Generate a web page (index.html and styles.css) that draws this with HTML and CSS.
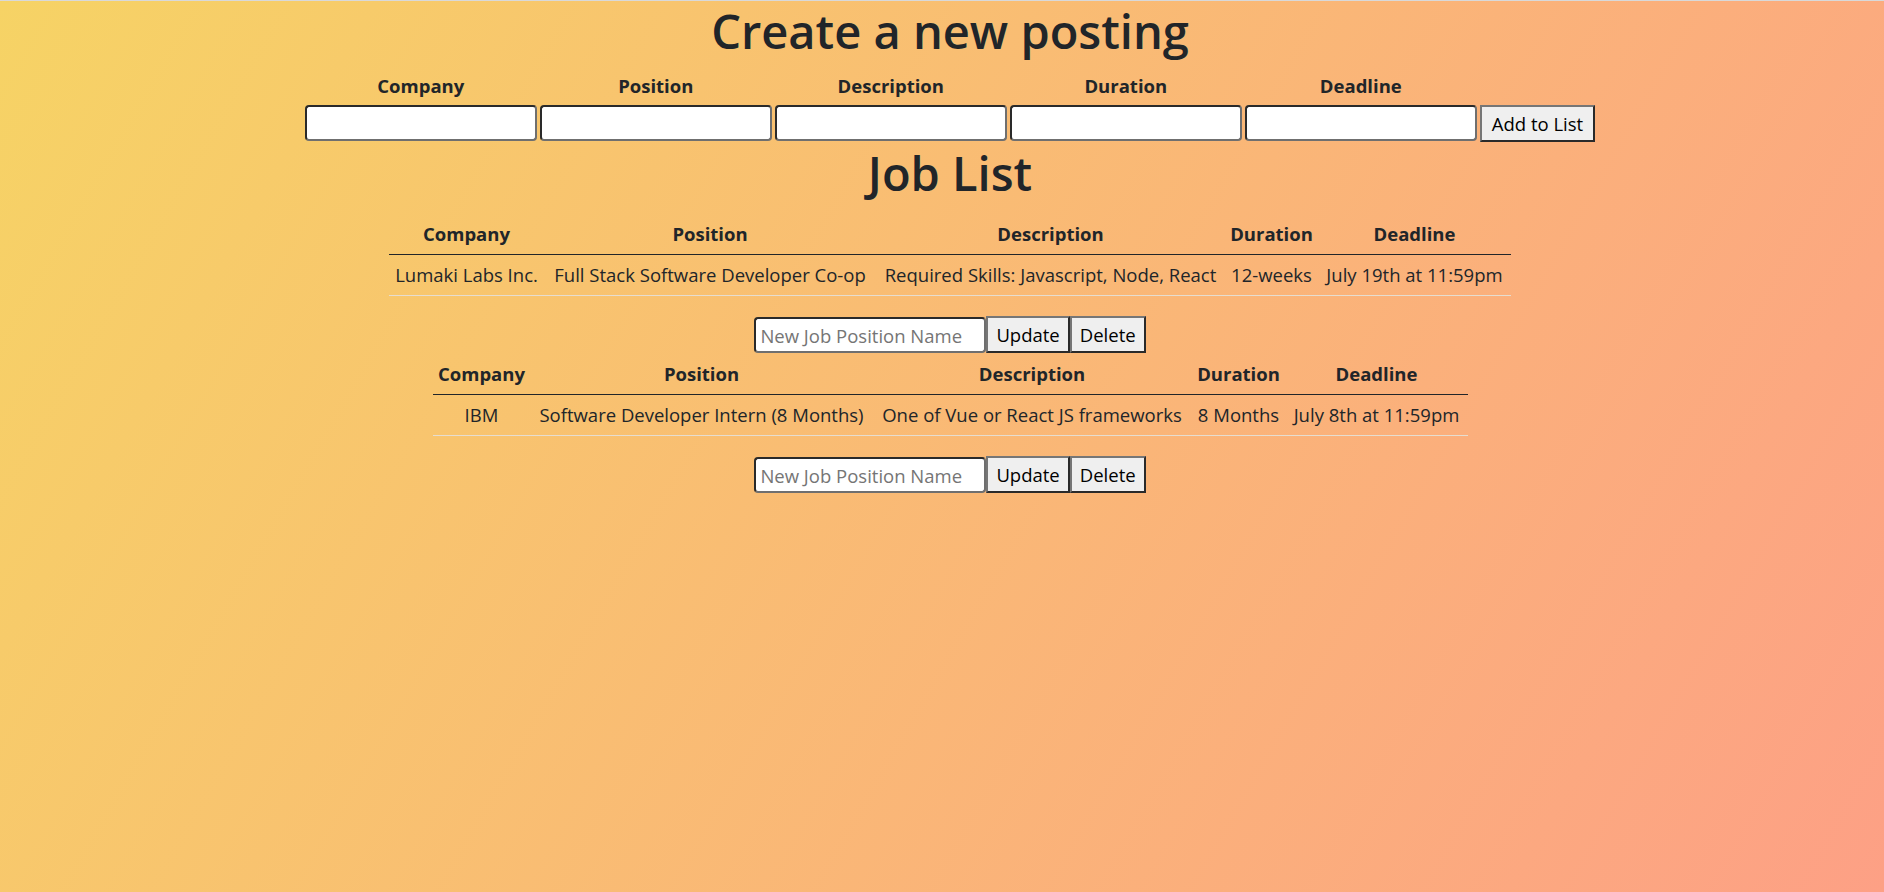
FILE: index.html
```html
<!DOCTYPE html>
<html lang="en">
<head>
<meta charset="utf-8">
<title>Job Postings</title>
<link rel="stylesheet" href="styles.css">
</head>
<body>
<div class="app">
  <h1 class="title title-create">Create a new posting</h1>
  <form class="post-form">
    <label class="field-label" for="f-company">Company</label>
    <label class="field-label" for="f-position">Position</label>
    <label class="field-label" for="f-description">Description</label>
    <label class="field-label" for="f-duration">Duration</label>
    <label class="field-label" for="f-deadline">Deadline</label>
    <span class="field-label"></span>
    <input class="text-input" id="f-company" type="text">
    <input class="text-input" id="f-position" type="text">
    <input class="text-input" id="f-description" type="text">
    <input class="text-input" id="f-duration" type="text">
    <input class="text-input" id="f-deadline" type="text">
    <button class="btn btn-add" type="button">Add to List</button>
  </form>

  <h1 class="title title-list">Job List</h1>

  <div class="job">
    <table class="job-table t1">
      <colgroup>
        <col class="t1-c1"><col class="t1-c2"><col class="t1-c3"><col class="t1-c4"><col class="t1-c5">
      </colgroup>
      <thead>
        <tr><th>Company</th><th>Position</th><th>Description</th><th>Duration</th><th>Deadline</th></tr>
      </thead>
      <tbody>
        <tr><td>Lumaki Labs Inc.</td><td>Full Stack Software Developer Co-op</td><td>Required Skills: Javascript, Node, React</td><td>12-weeks</td><td>July 19th at 11:59pm</td></tr>
      </tbody>
    </table>
    <div class="update-row">
      <input class="text-input rename-input" type="text" placeholder="New Job Position Name"><button class="btn" type="button">Update</button><button class="btn" type="button">Delete</button>
    </div>
  </div>

  <div class="job">
    <table class="job-table t2">
      <colgroup>
        <col class="t2-c1"><col class="t2-c2"><col class="t2-c3"><col class="t2-c4"><col class="t2-c5">
      </colgroup>
      <thead>
        <tr><th>Company</th><th>Position</th><th>Description</th><th>Duration</th><th>Deadline</th></tr>
      </thead>
      <tbody>
        <tr><td>IBM</td><td>Software Developer Intern (8 Months)</td><td>One of Vue or React JS frameworks</td><td>8 Months</td><td>July 8th at 11:59pm</td></tr>
      </tbody>
    </table>
    <div class="update-row">
      <input class="text-input rename-input" type="text" placeholder="New Job Position Name"><button class="btn" type="button">Update</button><button class="btn" type="button">Delete</button>
    </div>
  </div>
</div>
</body>
</html>
```

FILE: styles.css
```css
* { box-sizing: border-box; }

html {
  min-height: 100%;
  background: linear-gradient(120deg, #f6d365 0%, #fda085 100%);
}

body {
  margin: 0;
  border-top: 1px solid #d9d9d9;
  font-family: "Open Sans", "Noto Sans", "DejaVu Sans", sans-serif;
  font-size: 18.5px;
  line-height: 30px;
  color: #212529;
}

.app {
  padding-left: 16px;
  text-align: center;
}

.title {
  margin: 0 0 10px;
  font-size: 47px;
  font-weight: 600;
  line-height: 60px;
}

.title-list {
  margin-bottom: 11px;
}

.post-form {
  display: grid;
  grid-template-columns: repeat(5, 232px) auto;
  grid-template-rows: 30px 38px;
  column-gap: 3px;
  row-gap: 4px;
  justify-content: center;
  align-items: start;
  margin: 0;
}

.field-label {
  font-weight: 700;
  line-height: 30px;
  text-align: center;
}

.text-input {
  width: 232px;
  height: 36px;
  margin: 0;
  padding: 0 4px;
  border: 2px solid;
  border-color: #2a2a2a #6f6f6f #6f6f6f #2a2a2a;
  border-radius: 4px;
  background: #fff;
  font: inherit;
  color: #212529;
}

.text-input::placeholder {
  color: #757575;
}

.btn {
  height: 37px;
  margin: 0;
  padding: 0 8px;
  border: 2px solid;
  border-color: #767676 #2a2a2a #2a2a2a #767676;
  border-radius: 0;
  background: #efefef;
  font: inherit;
  line-height: 30px;
  color: #000;
}

.btn-add {
  height: 37px;
  padding: 0 10px;
}

.job-table {
  border-collapse: separate;
  border-spacing: 0;
  table-layout: fixed;
  margin: 0 auto 20px;
  text-align: center;
}

.job-table th,
.job-table td {
  padding: 5px;
  line-height: 30px;
  white-space: nowrap;
  overflow: visible;
}

.job-table th {
  font-weight: 700;
  border-bottom: 1px solid #212529;
}

.job-table td {
  font-weight: 400;
  border-bottom: 1px solid #e6ddd0;
}

.t1 { width: 1122px; }
.t1-c1 { width: 155px; }
.t1-c2 { width: 332px; }
.t1-c3 { width: 349px; }
.t1-c4 { width: 93px; }
.t1-c5 { width: 193px; }

.t2 { width: 1035px; }
.t2-c1 { width: 98px; }
.t2-c2 { width: 342px; }
.t2-c3 { width: 319px; }
.t2-c4 { width: 94px; }
.t2-c5 { width: 182px; }

.update-row {
  display: flex;
  justify-content: center;
  align-items: flex-start;
  height: 38px;
}

.rename-input {
  margin-top: 1px;
}
```
